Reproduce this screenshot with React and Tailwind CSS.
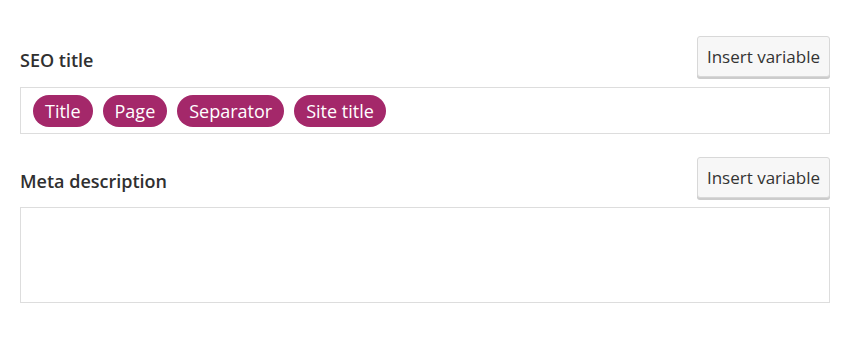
import React from "react";

const font = { fontFamily: '"Open Sans", "Noto Sans", sans-serif' };

function Pill({ children }) {
  return (
    <span className="inline-flex h-[32px] items-center rounded-full bg-[#a4286a] px-[12px] text-[18px] leading-none text-white">
      {children}
    </span>
  );
}

function InsertButton() {
  return (
    <button className="flex h-[41px] items-center rounded-[3px] border border-[#d8d8d8] bg-[#f7f7f7] px-[9px] text-[17px] leading-none text-[#333] shadow-[0_2px_0_#ccc]">
      Insert variable
    </button>
  );
}

export default function App() {
  return (
    <div className="h-[347px] w-[850px] bg-white px-[20px] pt-[36px]" style={font}>
      <div className="flex h-[41px] items-center justify-between">
        <span className="mt-[6px] text-[18px] leading-none font-semibold text-[#303030]">SEO title</span>
        <InsertButton />
      </div>
      <div className="mt-[10px] flex h-[47px] items-center gap-[10px] border border-[#ddd] px-[12px]">
        <Pill>Title</Pill>
        <Pill>Page</Pill>
        <Pill>Separator</Pill>
        <Pill>Site title</Pill>
      </div>
      <div className="mt-[23px] flex h-[41px] items-center justify-between">
        <span className="mt-[6px] text-[18px] leading-none font-semibold text-[#303030]">Meta description</span>
        <InsertButton />
      </div>
      <div className="mt-[9px] h-[96px] border border-[#ddd]" />
    </div>
  );
}
